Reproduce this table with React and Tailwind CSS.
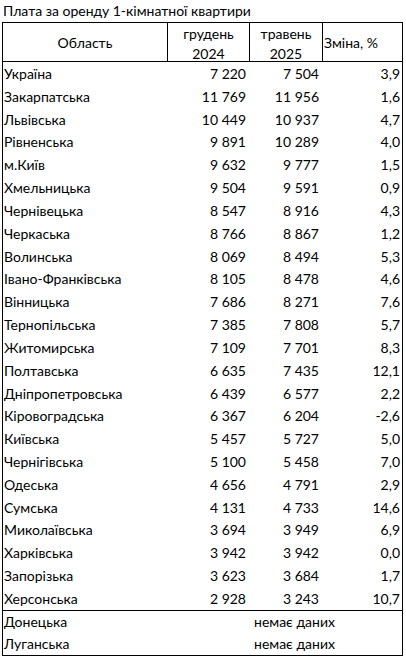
const rows = [
  ['Україна', '7 220', '7 504', '3,9'],
  ['Закарпатська', '11 769', '11 956', '1,6'],
  ['Львівська', '10 449', '10 937', '4,7'],
  ['Рівненська', '9 891', '10 289', '4,0'],
  ['м.Київ', '9 632', '9 777', '1,5'],
  ['Хмельницька', '9 504', '9 591', '0,9'],
  ['Чернівецька', '8 547', '8 916', '4,3'],
  ['Черкаська', '8 766', '8 867', '1,2'],
  ['Волинська', '8 069', '8 494', '5,3'],
  ['Івано-Франківська', '8 105', '8 478', '4,6'],
  ['Вінницька', '7 686', '8 271', '7,6'],
  ['Тернопільська', '7 385', '7 808', '5,7'],
  ['Житомирська', '7 109', '7 701', '8,3'],
  ['Полтавська', '6 635', '7 435', '12,1'],
  ['Дніпропетровська', '6 439', '6 577', '2,2'],
  ['Кіровоградська', '6 367', '6 204', '-2,6'],
  ['Київська', '5 457', '5 727', '5,0'],
  ['Чернігівська', '5 100', '5 458', '7,0'],
  ['Одеська', '4 656', '4 791', '2,9'],
  ['Сумська', '4 131', '4 733', '14,6'],
  ['Миколаївська', '3 694', '3 949', '6,9'],
  ['Харківська', '3 942', '3 942', '0,0'],
  ['Запорізька', '3 623', '3 684', '1,7'],
  ['Херсонська', '2 928', '3 243', '10,7'],
]

const noData = ['Донецька', 'Луганська']

export default function App() {
  return (
    <div className="h-[658px] w-[406px] overflow-hidden bg-white pl-[2px] pt-[3px] font-['Lato',sans-serif] text-[14px] leading-none text-black">
      <p className="h-[19px] pl-[1px] leading-[16px]">Плата за оренду 1-кімнатної квартири</p>

      <div className="w-[401px] border border-black">
        {/* шапка */}
        <div className="grid h-[39px] grid-cols-[164px_82px_73px_80px] border-b border-black">
          <div className="flex items-center justify-center pt-[2px]">Область</div>
          <div className="flex flex-col items-center gap-[5px] border-l border-black pt-[3px] leading-[15px]">
            <span>грудень</span>
            <span>2024</span>
          </div>
          <div className="flex flex-col items-center gap-[5px] border-l border-black pt-[3px] leading-[15px]">
            <span>травень</span>
            <span>2025</span>
          </div>
          <div className="flex items-center border-l border-black pl-[1px] pt-[2px]">Зміна, %</div>
        </div>

        <div className="border-b border-black">
          {rows.map(([name, dec, may, diff]) => (
            <div key={name} className="grid h-[22.83px] grid-cols-[164px_82px_73px_80px] items-center pt-[1px]">
              <span className="pl-[1px]">{name}</span>
              <span className="pr-[3px] text-right">{dec}</span>
              <span className="pr-[3px] text-right">{may}</span>
              <span className="pr-[2px] text-right">{diff}</span>
            </div>
          ))}
        </div>

        {noData.map(name => (
          <div key={name} className="grid h-[22px] grid-cols-[249px_150px] items-center">
            <span className="pl-[1px]">{name}</span>
            <span className="pl-[2px]">немає даних</span>
          </div>
        ))}
      </div>
    </div>
  )
}
